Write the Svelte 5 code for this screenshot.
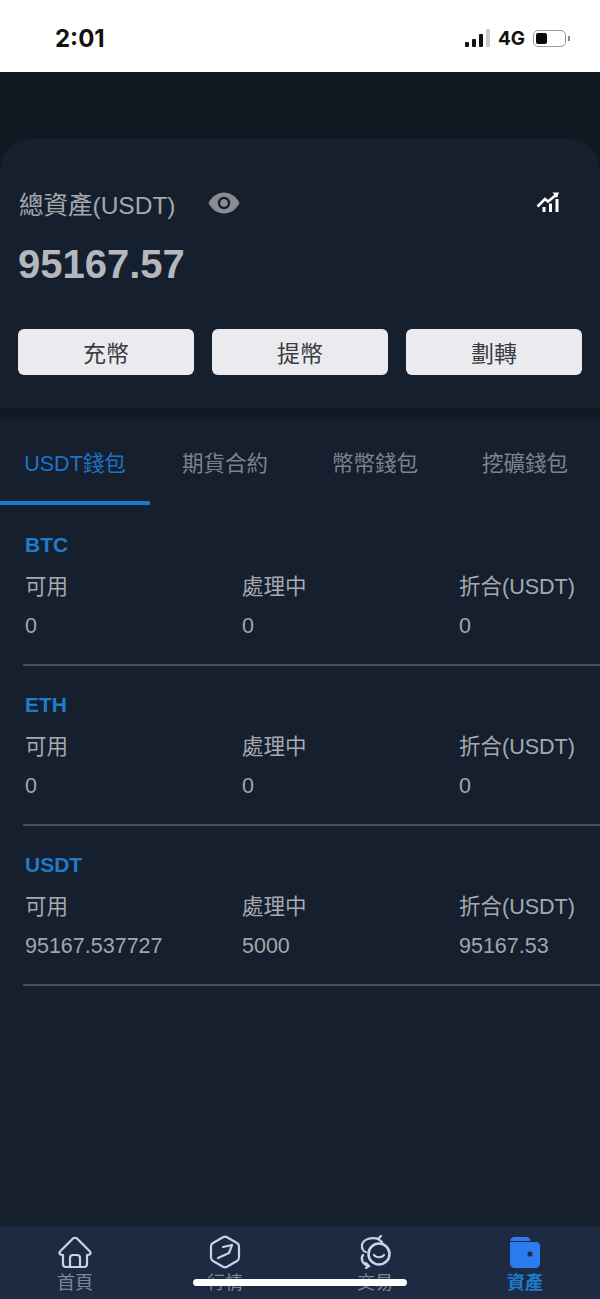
<script>
  const tabs = ["USDT錢包", "期貨合約", "幣幣錢包", "挖礦錢包"];
  const actions = ["充幣", "提幣", "劃轉"];
  const wallets = [
    { coin: "BTC", free: "0", pending: "0", worth: "0" },
    { coin: "ETH", free: "0", pending: "0", worth: "0" },
    { coin: "USDT", free: "95167.537727", pending: "5000", worth: "95167.53" }
  ];
</script>

<div class="page">
  <header class="status-bar">
    <span class="clock">2:01</span>
    <div class="status-right">
      <span class="signal"><i class="b1"></i><i class="b2"></i><i class="b3"></i><i class="b4"></i></span>
      <span class="net">4G</span>
      <span class="battery"><span class="level"></span></span>
      <span class="battery-tip"></span>
    </div>
  </header>

  <div class="top-gap"></div>

  <section class="summary">
    <div class="summary-head">
      <span class="summary-label">總資產(USDT)</span>
      <svg class="eye" width="32" height="22" viewBox="0 0 32 22" aria-hidden="true">
        <path d="M.5 11C4 4 10 .5 16 .5S28 4 31.500 11C28 18 22 21.500 16 21.500S4 18 .5 11z" fill="#8a8c90" />
        <circle cx="16" cy="11" r="6.200" fill="#161f2d" />
        <circle cx="16" cy="11" r="3.800" fill="#8a8c90" />
      </svg>
      <svg class="chart" width="26" height="24" viewBox="0 0 26 24" fill="none" stroke="#fff" aria-hidden="true">
        <path d="M1.500 15.500 9 8l3 2.500 8-6.500" stroke-width="2.600" />
        <path d="M16.500 1.500h6.500l-2 5.500z" fill="#fff" stroke="none" />
        <path d="M8 16v5M14.500 12.500V21M21 8v13" stroke-width="3" />
      </svg>
    </div>
    <div class="total">95167.57</div>
    <div class="actions">
      {#each actions as action}
        <button class="action">{action}</button>
      {/each}
    </div>
  </section>

  <div class="divider-band"></div>

  <main class="wallet-panel">
    <nav class="tabs">
      {#each tabs as tab, i}
        <div class="tab" class:active={i === 0}>{tab}</div>
      {/each}
    </nav>

    <div class="list">
      {#each wallets as w}
        <div class="row">
          <div class="coin">{w.coin}</div>
          <div class="cols">
            <span class="head">可用</span>
            <span class="head">處理中</span>
            <span class="head">折合(USDT)</span>
            <span class="val">{w.free}</span>
            <span class="val">{w.pending}</span>
            <span class="val">{w.worth}</span>
          </div>
        </div>
      {/each}
    </div>
  </main>

  <footer class="tabbar">
    <div class="nav-item">
      <svg width="36" height="34" viewBox="0 0 36 34" fill="none" stroke="#c9d2e6" stroke-width="2.200" stroke-linejoin="round" stroke-linecap="round" aria-hidden="true">
        <path d="M12 32H9c-2 0-3-1-3-3v-9c-3 0-4.500-1.500-3-3.500L16 3.500c1-1 3-1 4 0l13 13c1.500 2 0 3.500-3 3.500v9c0 2-1 3-3 3h-3" />
        <path d="M13 32V23c0-2 1-3 3-3h4c2 0 3 1 3 3v9z" />
      </svg>
      <span class="nav-label">首頁</span>
    </div>
    <div class="nav-item">
      <svg width="36" height="34" viewBox="0 0 36 34" fill="none" stroke="#c9d2e6" stroke-width="2.200" stroke-linejoin="round" stroke-linecap="round" aria-hidden="true">
        <path d="M16 2.200c1.300-.7 2.700-.7 4 0l10 5.800c1.300.8 2 1.900 2 3.400v11.200c0 1.500-.7 2.600-2 3.400l-10 5.800c-1.300.7-2.700.7-4 0L6 26c-1.300-.8-2-1.900-2-3.400V11.400C4 9.900 4.700 8.800 6 8z" />
        <path d="M11 23l11-5 3-8" />
        <path d="M16 12l9-2" />
      </svg>
      <span class="nav-label">行情</span>
    </div>
    <div class="nav-item">
      <svg width="36" height="34" viewBox="0 0 36 34" fill="none" stroke="#c9d2e6" stroke-width="2.200" stroke-linecap="round" aria-hidden="true">
        <circle cx="22" cy="19" r="10.500" stroke-width="2.600" />
        <path d="M17 20c2 3 8 3 10 0" />
        <path d="M22 4C14 2 6 4 5 10c-.7 4 2 7 4 7" />
        <path d="M24 1l-3 3 4 3" />
        <path d="M6 20c-3 4 0 10 6 11" />
        <path d="M9 33l3-2-3-3" />
      </svg>
      <span class="nav-label">交易</span>
    </div>
    <div class="nav-item current">
      <svg width="36" height="34" viewBox="0 0 36 34" aria-hidden="true">
        <path d="M3 7c0-3 2-5 5-5h11c3 0 4 1 4 3v2z" fill="#2a7df0" />
        <path d="M3 7h26c3 0 4 2 4 4v17c0 3-2 5-5 5H8c-3 0-5-2-5-5z" fill="#2a7df0" />
        <path d="M3 6.500h20" stroke="#1d2a42" stroke-width="1" />
        <circle cx="23" cy="19" r="2.600" fill="#1d2a42" />
      </svg>
      <span class="nav-label">資產</span>
    </div>
    <div class="home-indicator"></div>
  </footer>
</div>

<style>
  :global(body) {
    margin: 0;
    background: #161f2d;
  }

  .page {
    width: 600px;
    height: 1299px;
    display: flex;
    flex-direction: column;
    overflow: hidden;
    background: #0f1921;
    font-family: "Liberation Sans", "Noto Sans CJK TC", sans-serif;
  }

  .status-bar {
    height: 72px;
    flex-shrink: 0;
    box-sizing: border-box;
    padding: 4px 30px 0 55px;
    display: flex;
    align-items: center;
    justify-content: space-between;
    background: #fff;
    color: #111;
  }

  .clock {
    font-size: 24px;
    font-weight: 700;
    font-family: "Inter", "Liberation Sans", sans-serif;
  }

  .status-right {
    display: flex;
    align-items: center;
  }

  .signal {
    display: flex;
    align-items: flex-end;
    gap: 3px;
    height: 18px;
  }

  .signal i {
    display: block;
    width: 4px;
    border-radius: 1px;
    background: #111;
  }

  .signal .b1 { height: 5px; }
  .signal .b2 { height: 8px; }
  .signal .b3 { height: 13px; }
  .signal .b4 { height: 18px; background: #ccc; }

  .net {
    margin-left: 8px;
    font-size: 19px;
    font-weight: 700;
    font-family: "Inter", "Liberation Sans", sans-serif;
  }

  .battery {
    margin-left: 8px;
    width: 27px;
    height: 11px;
    padding: 2px;
    border: 1.5px solid #999;
    border-radius: 5px;
    display: block;
    box-sizing: content-box;
  }

  .level {
    display: block;
    width: 11px;
    height: 11px;
    border-radius: 2px;
    background: #0a0a0a;
  }

  .battery-tip {
    width: 2px;
    height: 5px;
    margin-left: 2px;
    background: #888;
  }

  .top-gap {
    height: 67px;
    flex-shrink: 0;
  }

  .summary {
    height: 269px;
    flex-shrink: 0;
    box-sizing: border-box;
    padding: 48px 0 0 18px;
    border-radius: 30px 30px 0 0;
    background: #161f2d;
  }

  .summary-head {
    display: flex;
    align-items: center;
    height: 36px;
  }

  .summary-label {
    font-size: 24.500px;
    color: #a4a8ae;
    margin: -4px 0 0 1px;
  }

  .eye {
    margin-left: 32px;
    margin-top: -4px;
  }

  .chart {
    margin-left: auto;
    margin-right: 38px;
    margin-top: -4px;
  }

  .total {
    margin-top: 18px;
    font-size: 40px;
    line-height: 46px;
    font-weight: 700;
    color: #b4b8bd;
  }

  .actions {
    margin-top: 42px;
    display: grid;
    grid-template-columns: repeat(3, 176px);
    gap: 18px;
  }

  .action {
    height: 46px;
    padding: 0;
    border: none;
    border-radius: 6px;
    background: #ebebef;
    color: #3a3d42;
    font-family: inherit;
    font-size: 23px;
  }

  .divider-band {
    height: 12px;
    flex-shrink: 0;
    background: #101a23;
  }

  .wallet-panel {
    flex: 1;
    display: flex;
    flex-direction: column;
    min-height: 0;
    background: #161f2d;
  }

  .tabs {
    display: grid;
    grid-template-columns: repeat(4, 150px);
    height: 85px;
    flex-shrink: 0;
  }

  .tab {
    box-sizing: border-box;
    padding-top: 29px;
    text-align: center;
    font-size: 21.500px;
    line-height: 30px;
    color: #7d838c;
  }

  .tab.active {
    color: #1c74c4;
    border-bottom: 4px solid #1c78d0;
  }

  .list {
    padding: 27px 0 0 23px;
  }

  .row {
    height: 132px;
    margin-bottom: 26px;
    border-bottom: 2px solid #4a4d5c;
  }

  .coin {
    margin-left: 2px;
    font-size: 21px;
    line-height: 26px;
    font-weight: 700;
    color: #1f7ccb;
  }

  .cols {
    display: grid;
    grid-template-columns: 217px 217px 1fr;
    grid-auto-rows: 40px;
    row-gap: 2px;
    margin: 6px 0 0 2px;
    align-items: center;
  }

  .head {
    font-size: 21.500px;
    color: #a6aab0;
    white-space: nowrap;
  }

  .val {
    font-size: 21.500px;
    color: #a2a6ac;
    white-space: nowrap;
  }

  .tabbar {
    position: relative;
    height: 72px;
    flex-shrink: 0;
    display: grid;
    grid-template-columns: repeat(4, 150px);
    background: #1d2a42;
  }

  .nav-item {
    display: flex;
    flex-direction: column;
    align-items: center;
    padding-top: 8px;
  }

  .nav-label {
    font-size: 18px;
    line-height: 22px;
    margin-top: 3px;
    color: #7f8796;
  }

  .current .nav-label {
    color: #1f7ccb;
    font-weight: 700;
  }

  .home-indicator {
    position: absolute;
    left: 193px;
    top: 52px;
    width: 214px;
    height: 7px;
    border-radius: 4px;
    background: #fff;
  }
</style>
